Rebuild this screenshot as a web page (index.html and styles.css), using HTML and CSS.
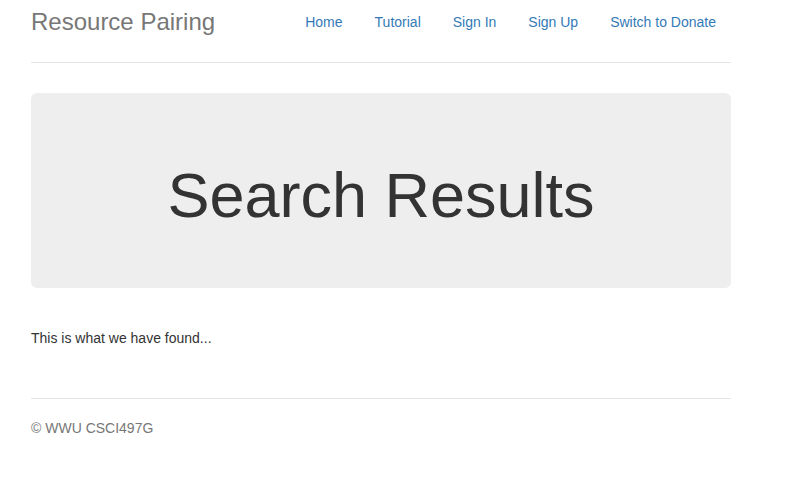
FILE: index.html
```html
<!DOCTYPE html>
<html lang="en">
<head>
<meta charset="utf-8">
<title>Resource Pairing</title>
<link rel="stylesheet" href="styles.css">
</head>
<body>
<div class="container">
  <div class="header">
    <h3 class="brand">Resource Pairing</h3>
    <ul class="nav">
      <li><a href="#">Home</a></li>
      <li><a href="#">Tutorial</a></li>
      <li><a href="#">Sign In</a></li>
      <li><a href="#">Sign Up</a></li>
      <li><a href="#">Switch to Donate</a></li>
    </ul>
  </div>
  <div class="jumbotron">
    <h1>Search Results</h1>
  </div>
  <div class="marketing">
    <p>This is what we have found...</p>
  </div>
  <footer class="footer">
    <p>&copy; WWU CSCI497G</p>
  </footer>
</div>
</body>
</html>
```

FILE: styles.css
```css
html, body {
  margin: 0;
  padding: 0;
  background: #fff;
}
body {
  font-family: "Liberation Sans", Arial, Helvetica, sans-serif;
  font-size: 14px;
  line-height: 20px;
  color: #333;
}
.container {
  width: 700px;
  margin-left: 16px;
  padding: 0 15px;
}
.header {
  display: flex;
  justify-content: space-between;
  align-items: flex-start;
  padding-bottom: 20px;
  border-bottom: 1px solid #e5e5e5;
}
.brand {
  margin: 0;
  padding-top: 1px;
  font-size: 24px;
  font-weight: 500;
  line-height: 41px;
  color: #777;
}
.nav {
  display: flex;
  list-style: none;
  margin: 0;
  padding: 0;
  gap: 2px;
}
.nav a {
  display: block;
  padding: 12px 15px 9px;
  color: #337ab7;
  text-decoration: none;
}
.jumbotron {
  margin-top: 30px;
  background: #eee;
  border-radius: 6px;
  padding: 48px 60px;
  text-align: center;
}
.jumbotron h1 {
  margin: 20px 0 10px;
  font-size: 63px;
  font-weight: 500;
  line-height: 69.3px;
  color: #333;
}
.marketing {
  margin: 40px 0 0;
  padding-bottom: 40px;
}
.marketing p {
  margin: 0 0 10px;
}
.footer {
  border-top: 1px solid #e5e5e5;
  padding-top: 19px;
  color: #777;
}
.footer p {
  margin: 0 0 10px;
}
```
